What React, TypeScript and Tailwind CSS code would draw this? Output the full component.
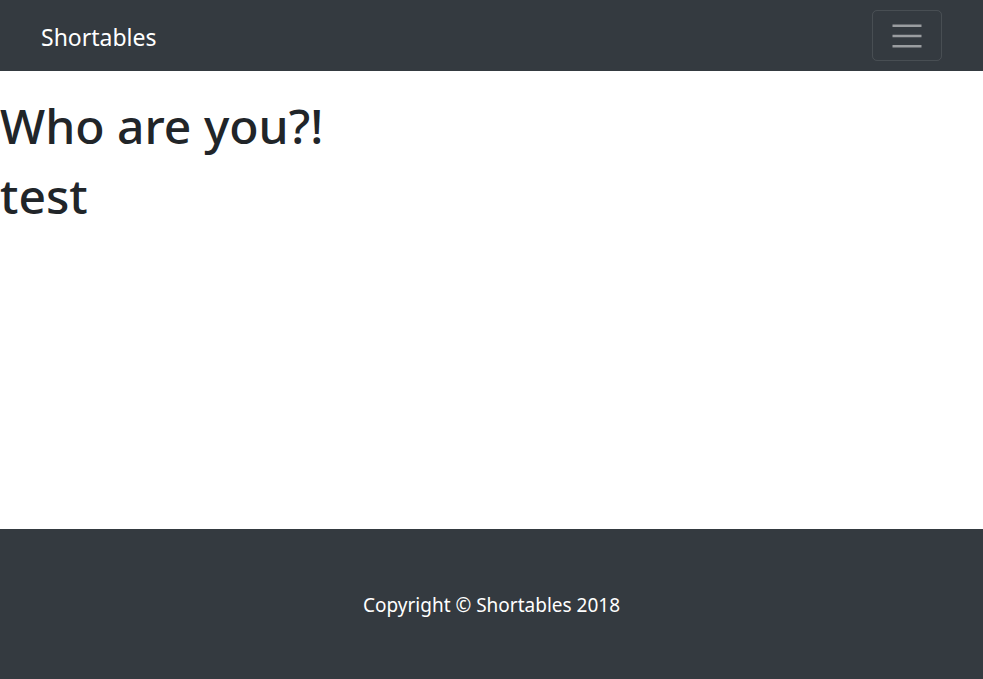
import React from "react";

export default function App() {
  return (
    <div className="min-h-[679px] flex flex-col bg-white" style={{ fontFamily: '"Noto Sans", "Open Sans", sans-serif' }}>
      <nav className="h-[71px] bg-[#343a40] flex items-center justify-between pl-[41px] pr-[41px]">
        <span className="text-white text-[23px] leading-none pt-[3px]">Shortables</span>
        <button className="w-[70px] h-[51px] border border-white/10 rounded-[5px] flex items-center justify-center">
          <svg width="30" height="30" viewBox="0 0 30 30">
            <path d="M0.5 4.7h29M0.5 15h29M0.5 25.3h29" stroke="rgba(255,255,255,0.5)" strokeWidth="2.5" />
          </svg>
        </button>
      </nav>
      <main className="h-[458px] text-[#212529]">
        <h1 className="text-[48px] leading-[56px] font-medium pt-[27px]">Who are you?!</h1>
        <h1 className="text-[48px] leading-[56px] font-medium pt-[14px]">test</h1>
      </main>
      <footer className="h-[150px] bg-[#343a40] flex items-center justify-center">
        <p className="text-white text-[19px] pt-[2px]">Copyright © Shortables 2018</p>
      </footer>
    </div>
  );
}
